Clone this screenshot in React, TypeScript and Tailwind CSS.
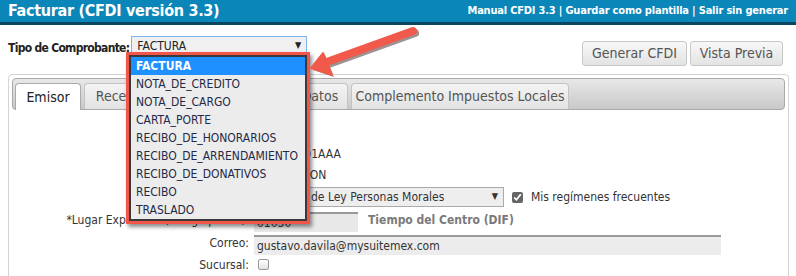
import React from "react";

const font = { fontFamily: 'Tahoma, "DejaVu Sans Condensed", "Noto Sans", sans-serif' };

const tipos = [
  "FACTURA",
  "NOTA_DE_CREDITO",
  "NOTA_DE_CARGO",
  "CARTA_PORTE",
  "RECIBO_DE_HONORARIOS",
  "RECIBO_DE_ARRENDAMIENTO",
  "RECIBO_DE_DONATIVOS",
  "RECIBO",
  "TRASLADO",
];

function Tab({ label, active, w }: { label: string; active?: boolean; w: string }) {
  return (
    <div
      className={`${w} h-[26px] mr-[3px] flex items-center justify-center text-[14px] rounded-t-[4px] border border-b-0 whitespace-nowrap ${
        active
          ? "bg-white border-[#aaaaaa] text-[#222] h-[27px] -mb-px"
          : "bg-gradient-to-b from-[#f4f4f4] to-[#e2e2e2] border-[#c4c4c4] text-[#555]"
      }`}
    >
      {label}
    </div>
  );
}

export default function App() {
  return (
    <div className="relative w-[796px] h-[276px] overflow-hidden bg-white" style={font}>
      {/* header */}
      <div className="h-[25px] bg-[#0a86b9] border-b-[3px] border-[#0c4560] flex items-center justify-between px-[8px] text-white">
        <h1 className="text-[16px] font-bold leading-none tracking-[-0.3px]">Facturar (CFDI versión 3.3)</h1>
        <div className="text-[11px] font-bold tracking-[-0.2px]">
          Manual CFDI 3.3 | Guardar como plantilla | Salir sin generar
        </div>
      </div>

      {/* tipo de comprobante + buttons */}
      <div className="flex items-start px-[8px] pt-[11px] h-[49px]">
        <label className="shrink-0 mr-[2px] text-[12px] font-bold text-[#222] mt-[3px] whitespace-nowrap tracking-[-0.7px]">
          Tipo de Comprobante:
        </label>
        <div className="w-[176px] h-[19px] border border-[#7eb4ea] bg-[#f0f0f0] flex items-center justify-between px-[5px] text-[12px] text-[#222]">
          <span>FACTURA</span>
          <span className="text-[9px]">▼</span>
        </div>
        <div className="ml-auto mr-[5px] mt-[5px] flex gap-[3px]">
          <button className="h-[25px] w-[105px] rounded-[3px] border border-[#c8c8c8] bg-gradient-to-b from-[#f8f8f8] to-[#e3e3e3] text-[14px] text-[#555]">
            Generar CFDI
          </button>
          <button className="h-[25px] w-[93px] rounded-[3px] border border-[#c8c8c8] bg-gradient-to-b from-[#f8f8f8] to-[#e3e3e3] text-[14px] text-[#555]">
            Vista Previa
          </button>
        </div>
      </div>

      {/* tab panel */}
      <div className="mx-[8px] w-[781px] h-[220px] border border-[#d4d4d4] rounded-[4px] p-[3px]">
        <div className="h-[32px] border border-[#aaaaaa] rounded-[4px] bg-gradient-to-b from-[#e8e8e8] to-[#c9c9c9] flex items-end pl-[2px]">
          <Tab label="Emisor" active w="w-[66px]" />
          <Tab label="Receptor" w="w-[80px]" />
          <Tab label="Conceptos" w="w-[84px]" />
          <Tab label="Otros Datos" w="w-[94px]" />
          <Tab label="Complemento Impuestos Locales" w="w-[218px]" />
        </div>

        <div className="grid grid-cols-[237px_1fr] gap-x-[5px] pt-[11px] text-[12px] text-[#333]">
          <div className="h-[22px]" />
          <div className="h-[22px]" />

          <div className="h-[21px]" />
          <div className="h-[21px] flex items-center">AAA010101AAA</div>

          <div className="h-[21px]" />
          <div className="h-[21px] flex items-center">CONVERSION</div>

          <div className="h-[24px]" />
          <div className="h-[24px] flex items-center">
            <div className="w-[250px] h-[20px] border border-[#aaaaaa] bg-[#eeeeee] flex items-center justify-between pl-[10px] pr-[5px]">
              <span>General de Ley Personas Morales</span>
              <span className="text-[9px]">▼</span>
            </div>
            <input type="checkbox" defaultChecked className="ml-[8px] w-[11px] h-[11px] accent-[#666]" />
            <span className="ml-[8px]">Mis regímenes frecuentes</span>
          </div>

          <div className="h-[23px] flex items-end pb-[3px] justify-end whitespace-nowrap">*Lugar Expedicion(codigo postal):</div>
          <div className="h-[23px] flex items-end">
            <div className="w-[104px] h-[20px] bg-[#e8e8e8] border-t-2 border-[#999] flex items-center px-[3px]">01030</div>
            <span className="ml-[10px] mb-[3px] font-bold text-[#7a7a7a]">Tiempo del Centro (DIF)</span>
          </div>

          <div className="h-[23px] flex items-end pb-[3px] justify-end">Correo:</div>
          <div className="h-[23px] flex items-end">
            <div className="w-[467px] h-[20px] bg-[#ececec] border-t-2 border-[#999] flex items-center px-[3px]">
              gustavo.davila@mysuitemex.com
            </div>
          </div>

          <div className="h-[20px] flex items-center justify-end">Sucursal:</div>
          <div className="h-[20px] flex items-center">
            <div className="ml-[4px] -mt-[2px] w-[11px] h-[11px] rounded-[2px] border border-[#999] bg-gradient-to-b from-white to-[#e4e4e4]" />
          </div>
        </div>
      </div>

      {/* open dropdown, highlighted with red box */}
      <div className="absolute left-[126px] top-[52px] w-[184px] border-[3px] border-[#f4554a] shadow-[2px_3px_4px_rgba(0,0,0,0.45)]">
        <div className="border-2 border-[#3a3a3a] bg-[#ececec]">
          {tipos.map((t, i) => (
            <div
              key={t}
              className={`h-[18px] flex items-center pl-[5px] text-[12px] ${
                i === 0 ? "bg-[#1e90ff] text-white font-bold" : "text-[#1f2a48]"
              }`}
            >
              {t}
            </div>
          ))}
        </div>
      </div>

      {/* arrow */}
      <svg className="absolute left-[300px] top-[18px]" width="130" height="70" viewBox="0 0 130 70">
        <g transform="translate(2,2)" fill="#3a2a2a" opacity="0.5">
          <line x1="113" y1="13" x2="24" y2="45" stroke="#3a2a2a" strokeWidth="8" strokeLinecap="round" />
          <polygon points="11,50 23,35 32,57" />
        </g>
        <line x1="113" y1="13" x2="24" y2="45" stroke="#f15a4a" strokeWidth="8" strokeLinecap="round" />
        <polygon points="11,50 23,35 32,57" fill="#f15a4a" stroke="#f15a4a" strokeWidth="2" strokeLinejoin="round" />
      </svg>
    </div>
  );
}
